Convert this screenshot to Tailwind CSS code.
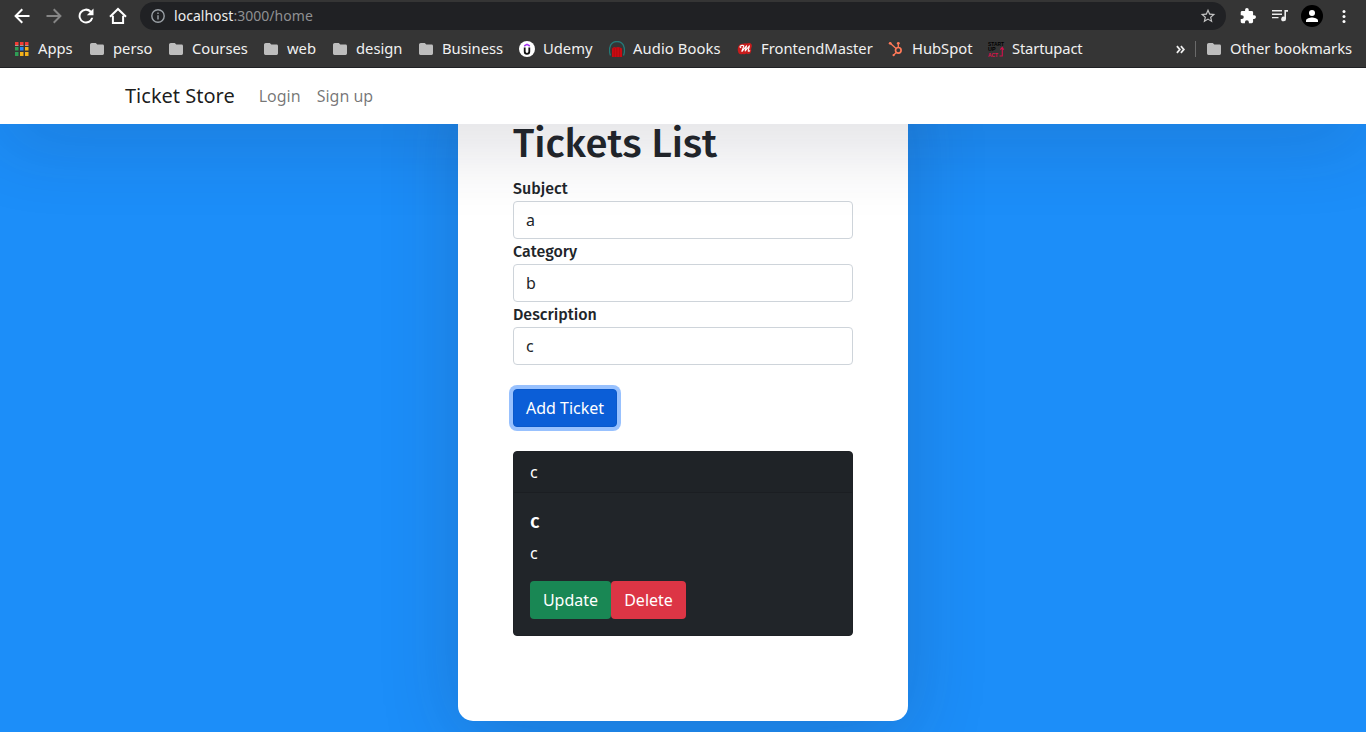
<!DOCTYPE html>
<html lang="en">
<head>
<meta charset="utf-8">
<title>Ticket Store</title>
<script src="https://cdn.jsdelivr.net/npm/@tailwindcss/browser@4"></script>
</head>
<body class="flex h-[732px] w-[1366px] flex-col overflow-hidden bg-[#1c8ef9] font-['Noto_Sans',sans-serif] text-base text-[#212529]">
<svg class="hidden">
  <symbol id="folder" viewBox="0 0 16 14"><path fill="#bdbdbd" d="M1.800 1H5.800L7.300 2.600H12.600Q14 2.600 14 4V11.600Q14 13 12.600 13H1.400Q0 13 0 11.600V2.600Q0 1 1.800 1Z"/></symbol>
</svg>

<!-- Browser toolbar and bookmarks -->
<header class="relative z-20 flex h-[68px] shrink-0 flex-col border-b border-[#202124] bg-[#353535] text-[#f1f1f1]">
  <div class="flex h-8 items-center pl-3">
    <svg class="size-5" viewBox="0 0 24 24" fill="#fff"><path d="M21 10.800H7.200l6-6L11.500 3 2.600 12l8.900 9 1.700-1.700-6-6H21z"/></svg>
    <svg class="ml-3 size-5" viewBox="0 0 24 24" fill="#868686"><path d="M3 10.800h13.800l-6-6L12.500 3l8.900 9-8.900 9-1.700-1.700 6-6H3z"/></svg>
    <svg class="ml-3 size-5" viewBox="0 0 24 24" fill="#fff"><path d="M18.300 5.700A8.900 8.900 0 1 0 20.700 14h-2.500a6.500 6.500 0 1 1-1.700-6.500L13 11h8V3z"/></svg>
    <svg class="ml-3 size-5" viewBox="0 0 20 20" fill="none" stroke="#fff" stroke-width="2"><path d="M2 10.800 10 3l8 7.800M4.900 9.800V17h10.200V9.800"/></svg>
    <div class="ml-3 flex h-7 w-[1086px] items-center rounded-full bg-[#202124] pl-[11px] pr-[10px]">
      <svg class="size-[14px]" viewBox="0 0 14 14" fill="none" stroke="#9aa0a6" stroke-width="1.400"><circle cx="7" cy="7" r="6.200"/><path d="M7 6.200v4.200M7 3.500v1.500"/></svg>
      <div class="ml-[9px] text-sm leading-5 tracking-[0.030px] text-[#8f9092]"><span class="text-[#eee]">localhost</span>:3000/home</div>
      <svg class="ml-auto size-4" viewBox="1 1 22 22" fill="#c4c4c4"><path d="m22 9.240-7.190-.62L12 2 9.190 8.630 2 9.240l5.460 4.730L5.820 21 12 17.270 18.180 21l-1.630-7.030zM12 15.400l-3.760 2.270 1-4.280-3.320-2.880 4.380-.38L12 6.100l1.710 4.040 4.380.38-3.320 2.880 1 4.280z"/></svg>
    </div>
    <svg class="ml-[14px] size-4" viewBox="1 1 22 22" fill="#fff"><path d="M20.500 11H19V7a2 2 0 0 0-2-2h-4V3.500a2.500 2.500 0 0 0-5 0V5H4a2 2 0 0 0-2 2v3.800h1.500a2.700 2.700 0 0 1 0 5.400H2V20c0 1.100.9 2 2 2h3.800v-1.500a2.700 2.700 0 0 1 5.400 0V22H17a2 2 0 0 0 2-2v-4h1.500a2.500 2.500 0 0 0 0-5z"/></svg>
    <svg class="ml-4 h-4 w-4" viewBox="0 0 16 16"><path d="M0 2.800h10M0 6.200h10M0 9.600h6.500" stroke="#eee" stroke-width="1.400"/><path d="M12.400 2.100H16v1.600h-2v7.200a2.400 2.400 0 1 1-1.600-2.200z" fill="#eee"/></svg>
    <svg class="ml-[13px] size-[22px]" viewBox="0 0 22 22"><circle cx="11" cy="11" r="11" fill="#000"/><circle cx="11" cy="8" r="3" fill="#fff"/><path d="M5 17v-1.500c0-2 4-3 6-3s6 1 6 3V17z" fill="#fff"/></svg>
    <svg class="ml-[18px] h-4 w-[6px]" viewBox="0 0 6 16" fill="#fff"><circle cx="3" cy="3.500" r="1.500"/><circle cx="3" cy="8.500" r="1.500"/><circle cx="3" cy="13.500" r="1.500"/></svg>
  </div>
  <nav class="flex h-[34px] items-center pl-[15px] pr-3 text-[14.750px] leading-5 whitespace-nowrap">
    <div class="flex w-[75px] items-center"><svg class="mr-[9px] size-[14px] shrink-0" viewBox="0 0 14 14"><path fill="#f33c35" d="M0 0h3.500v3H0zM5 0h3.500v3H5zM10 0h3.500v3H10z"/><path fill="#a99" d="M0 3h3.500v1H0zM5 3h3.500v1H5zM10 3h3.500v1H10z"/><path fill="#2f9e55" d="M0 5h3.500v3.500H0zM0 10h3.500v4H0z"/><path fill="#2b87f5" d="M5 5h3.500v3.500H5z"/><path fill="#f3b11a" d="M10 5h3.500v3.500H10zM5 10h3.500v4H5zM10 10h3.500v4H10z"/></svg><span class="pb-0.5">Apps</span></div>
    <div class="flex w-[79px] items-center"><svg class="mr-[7px] h-[14px] w-4 shrink-0"><use href="#folder"/></svg><span class="pb-0.5">perso</span></div>
    <div class="flex w-[95px] items-center"><svg class="mr-[7px] h-[14px] w-4 shrink-0"><use href="#folder"/></svg><span class="pb-0.5">Courses</span></div>
    <div class="flex w-[69px] items-center"><svg class="mr-[7px] h-[14px] w-4 shrink-0"><use href="#folder"/></svg><span class="pb-0.5">web</span></div>
    <div class="flex w-[86px] items-center"><svg class="mr-[7px] h-[14px] w-4 shrink-0"><use href="#folder"/></svg><span class="pb-0.5">design</span></div>
    <div class="flex w-[100px] items-center"><svg class="mr-[7px] h-[14px] w-4 shrink-0"><use href="#folder"/></svg><span class="pb-0.5">Business</span></div>
    <div class="flex w-[90px] items-center"><svg class="mr-2 size-4 shrink-0" viewBox="0 0 16 16"><circle cx="8" cy="8" r="8" fill="#fff"/><path d="M5.200 5 8 3.300 10.800 5" fill="none" stroke="#a435f0" stroke-width="1.500"/><path d="M5.700 6.600v3.900a2.300 2.300 0 0 0 4.600 0V6.600" fill="none" stroke="#111" stroke-width="1.800"/></svg><span class="pb-0.5">Udemy</span></div>
    <div class="flex w-[128px] items-center"><svg class="mr-2 size-4 shrink-0" viewBox="0 0 16 16"><path d="M1.500 14.500Q-.2 10 1 6a7.200 7.200 0 0 1 14 0q1.200 4-.5 8.500" fill="none" stroke="#247a78" stroke-width="1.300"/><path d="M3 7.500 5 6l2 .5L9 6l2 .5 2 1V16H3z" fill="#c90b12"/><path d="M5.200 7v9M7.800 7v9M10.500 7v9" stroke="#99090e" stroke-width=".5"/></svg><span class="pb-0.5 tracking-[0.100px]">Audio Books</span></div>
    <div class="flex w-[151px] items-center"><svg class="mr-2 size-4 shrink-0" viewBox="0 0 16 16"><path d="M1 6.200Q2.500 2.500 6 2.800 8 1.600 9.500 2.600q3.500-1.200 5 .6 1.200 2-.4 4.800.8 2.500-.9 4.600-2 1-3.600-.1-2 1.400-3.800.4-3 .9-4.300-.9-1.500-2.500-.5-5.800z" fill="#c91c1c"/><path d="M4.300 6.800Q2.400 6.500 3.200 5.200q2-1.500 3.700-.3L4.600 10.600M4.800 10.600 9.500 4.800 8.200 10l4.200-5.200-1.200 5.200q.8.800 1.700-.6" fill="none" stroke="#fff" stroke-width="1.100" stroke-linejoin="round"/></svg><span class="pb-0.5">FrontendMaster</span></div>
    <div class="flex w-[99px] items-center"><svg class="mr-2 size-4 shrink-0" viewBox="0 0 16 16" fill="none" stroke="#ff7a59"><circle cx="10.300" cy="9.300" r="2.800" stroke-width="1.700"/><path d="M10.300 6.500V2.800M8.100 7.500 2.500 2.500M8.300 11.500 5.700 14" stroke-width="1.300"/><g fill="#ff7a59" stroke="none"><circle cx="10.300" cy="2.300" r="1.400"/><circle cx="2.200" cy="2.300" r="1.400"/><circle cx="5.600" cy="14.200" r="1.100"/></g></svg><span class="pb-0.5">HubSpot</span></div>
    <div class="flex items-center"><svg class="mr-2 ml-px size-4 shrink-0 overflow-visible" viewBox="0 0 16 16" font-family="Liberation Sans" font-weight="700" font-size="6"><text x="0" y="4.600" textLength="16" lengthAdjust="spacingAndGlyphs" fill="#000">START</text><text x="0" y="10.100" textLength="7.500" lengthAdjust="spacingAndGlyphs" fill="#000">UP</text><text x="0" y="15.700" textLength="10" lengthAdjust="spacingAndGlyphs" fill="#e0104f">ACT</text><path d="M11.500 15H14.300V7.500M12.300 8.700l2-2.300 1.500 2.300" fill="none" stroke="#d3104c" stroke-width="1.100"/></svg><span class="pb-0.5 tracking-[-0.150px]">Startupact</span></div>
    <svg class="ml-auto mr-[10px] size-[9px]" viewBox="0 0 9 9" fill="none" stroke="#eee" stroke-width="1.800"><path d="m.9 1.200 2.900 3.300L.9 7.800M4.900 1.200l2.900 3.300-2.900 3.300"/></svg>
    <div class="mr-[11px] h-4 w-px bg-[#6a6a6a]"></div>
    <div class="flex w-[147px] items-center"><svg class="mr-[7px] h-[14px] w-4 shrink-0"><use href="#folder"/></svg><span class="pb-0.5">Other bookmarks</span></div>
  </nav>
</header>

<!-- Site navigation -->
<nav class="relative z-10 flex h-14 shrink-0 items-center bg-white pl-[125px] shadow-[0_14px_80px_rgba(34,35,58,0.2)]">
  <a class="mr-4 text-xl leading-[30px] text-black/90">Ticket Store</a>
  <a class="p-2 text-black/55">Login</a>
  <a class="p-2 text-black/55">Sign up</a>
</nav>

<main class="flex min-h-0 grow justify-center">
  <section class="-mt-[60px] h-[657px] w-[450px] shrink-0 rounded-[15px] bg-white px-[55px] pt-[55px] shadow-[0_14px_80px_rgba(34,35,58,0.2)]">
    <h1 class="mb-[7px] h-[50px] font-['Fira_Sans','Noto_Sans',sans-serif] text-[40px] leading-[50px] font-medium whitespace-nowrap">Tickets List</h1>
    <div class="h-[25px] font-['Fira_Sans','Noto_Sans',sans-serif] leading-[26px] font-medium">Subject</div>
    <div class="h-[38px] rounded border border-[#ced4da] bg-white px-3 py-1.5">a</div>
    <div class="h-[25px] font-['Fira_Sans','Noto_Sans',sans-serif] leading-[26px] font-medium">Category</div>
    <div class="h-[38px] rounded border border-[#ced4da] bg-white px-3 py-1.5">b</div>
    <div class="h-[25px] font-['Fira_Sans','Noto_Sans',sans-serif] leading-[26px] font-medium">Description</div>
    <div class="h-[38px] rounded border border-[#ced4da] bg-white px-3 py-1.5">c</div>
    <button class="mt-6 block h-[38px] w-[104px] rounded border border-[#0a58ca] bg-[#0b5ed7] whitespace-nowrap text-white shadow-[0_0_0_4px_rgba(49,132,253,0.5)]">Add Ticket</button>
    <article class="mt-6 h-[185px] overflow-hidden rounded border border-[#1e2125] bg-[#212529] text-white">
      <div class="h-[41px] border-b border-black/12 bg-black/3 px-4 py-2">c</div>
      <div class="p-4">
        <h5 class="mb-2 font-['Fira_Sans','Noto_Sans',sans-serif] text-xl leading-6 font-medium">c</h5>
        <p class="mb-4">c</p>
        <div class="flex">
          <button class="h-[38px] w-[81px] rounded bg-[#198754]">Update</button>
          <button class="h-[38px] w-[75px] rounded bg-[#dc3545]">Delete</button>
        </div>
      </div>
    </article>
  </section>
</main>
</body>
</html>
